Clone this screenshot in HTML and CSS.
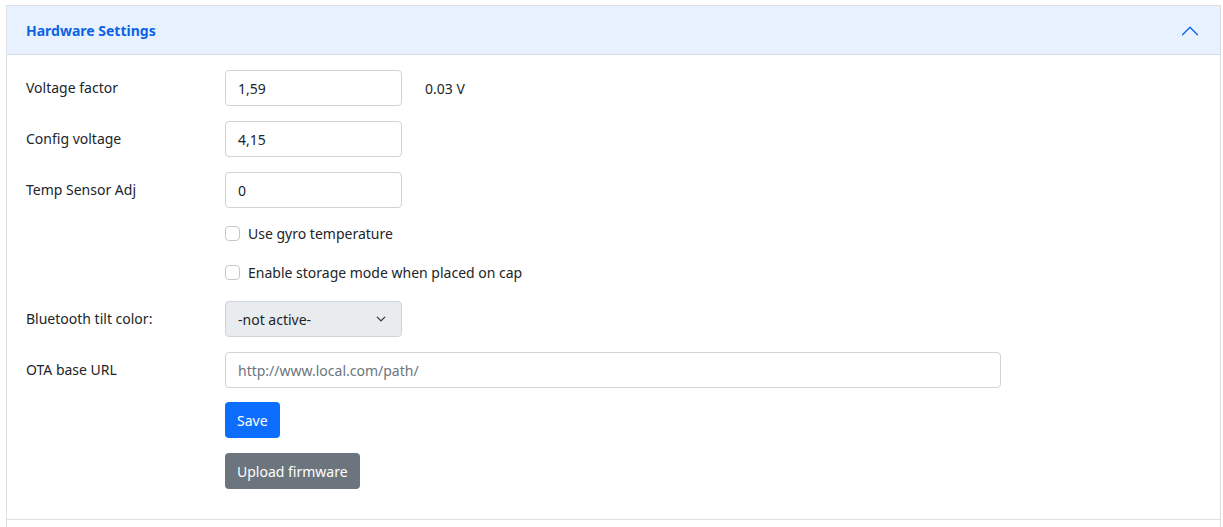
FILE: index.html
```html
<!DOCTYPE html>
<html lang="en">
<head>
  <meta charset="UTF-8" />
  <meta name="viewport" content="width=device-width, initial-scale=1.0" />
  <title>Hardware Settings</title>
  <link rel="stylesheet" href="styles.css">
</head>
<body>
  <div class="accordion">
    <div class="acc-item">
      <button class="acc-header" type="button">
        <span>Hardware Settings</span>
        <svg class="chevron" width="20" height="20" viewBox="0 0 16 16"><path fill="#0c63e4" fill-rule="evenodd" d="M1.646 4.646a.5.5 0 0 1 .708 0L8 10.293l5.646-5.647a.5.5 0 0 1 .708.708l-6 6a.5.5 0 0 1-.708 0l-6-6a.5.5 0 0 1 0-.708z"/></svg>
      </button>
      <div class="acc-body">
        <div class="row">
          <label class="lbl" for="voltageFactor">Voltage factor</label>
          <div class="ctrl">
            <input type="text" id="voltageFactor" class="field" value="1,59" />
            <span class="hint">0.03 V</span>
          </div>
        </div>
        <div class="row">
          <label class="lbl" for="configVoltage">Config voltage</label>
          <div class="ctrl"><input type="text" id="configVoltage" class="field" value="4,15" /></div>
        </div>
        <div class="row">
          <label class="lbl" for="tempAdj">Temp Sensor Adj</label>
          <div class="ctrl"><input type="text" id="tempAdj" class="field" value="0" /></div>
        </div>
        <div class="row check-row first-check">
          <span></span>
          <label class="check"><input type="checkbox" /><span>Use gyro temperature</span></label>
        </div>
        <div class="row check-row">
          <span></span>
          <label class="check"><input type="checkbox" /><span>Enable storage mode when placed on cap</span></label>
        </div>
        <div class="row">
          <label class="lbl" for="tiltColor">Bluetooth tilt color:</label>
          <div class="ctrl">
            <div class="select">
              <span>-not active-</span>
              <svg width="10" height="10" viewBox="0 0 16 16"><path fill="none" stroke="#343a40" stroke-linecap="round" stroke-linejoin="round" stroke-width="2.2" d="M2 5l6 6 6-6"/></svg>
            </div>
          </div>
        </div>
        <div class="row ota-row">
          <label class="lbl" for="otaUrl">OTA base URL</label>
          <div class="ctrl"><input type="text" id="otaUrl" class="field wide" placeholder="http://www.local.com/path/" /></div>
        </div>
        <div class="row">
          <span></span>
          <div class="ctrl"><button class="btn btn-primary" type="button">Save</button></div>
        </div>
        <div class="row">
          <span></span>
          <div class="ctrl"><button class="btn btn-secondary" type="button">Upload firmware</button></div>
        </div>
      </div>
    </div>
    <div class="acc-item next"></div>
  </div>
</body>
</html>
```
FILE: styles.css
```css
body {
  margin: 5px 2px 0 6px;
  font-family: 'Segoe UI', 'Noto Sans', 'Open Sans', sans-serif;
  font-size: 14px;
  line-height: 21px;
  color: #212529;
  background: #fff;
  overflow: hidden;
}
.accordion {
  border: 1px solid #dfdfdf;
  border-right-color: #dcdcdc;
}
.acc-header {
  box-sizing: border-box;
  display: flex;
  align-items: center;
  justify-content: space-between;
  width: 100%;
  height: 49px;
  padding: 1px 20px 0 19px;
  border: none;
  border-bottom: 1px solid #d3dbe6;
  background: #e7f1ff;
  color: #0c63e4;
  font-family: inherit;
  font-size: 14px;
  font-weight: 700;
  text-align: left;
  cursor: pointer;
}
.chevron {
  transform: rotate(180deg);
}
.acc-body {
  padding: 15px 19px 30px;
  border-bottom: 1px solid #dfdfdf;
}
.row {
  display: grid;
  grid-template-columns: 199px 1fr;
  align-items: center;
  min-height: 36px;
  margin-bottom: 15px;
}
.lbl {
  margin-top: -2px;
}
.row:last-child {
  margin-bottom: 0;
}
.ctrl {
  display: flex;
  align-items: center;
}
.field {
  box-sizing: border-box;
  width: 177px;
  height: 36px;
  padding: 6px 12px;
  border: 1px solid #ced4da;
  border-radius: 4px;
  font-family: inherit;
  font-size: 14px;
  color: #212529;
  background: #fff;
}
.field.wide {
  width: 776px;
}
.field::placeholder {
  color: #6c757d;
}
.hint {
  margin-left: 23px;
}
.check-row {
  min-height: 21px;
  margin-bottom: 18px;
}
.first-check {
  margin-top: 15px;
}
.ota-row {
  margin-bottom: 14px;
}
.check {
  display: flex;
  align-items: center;
  gap: 8px;
}
.check input {
  appearance: none;
  width: 15px;
  height: 15px;
  margin: 0;
  border: 1px solid #c4c8cc;
  border-radius: 4px;
  background: #fff;
}
.select {
  box-sizing: border-box;
  display: flex;
  align-items: center;
  justify-content: space-between;
  width: 177px;
  height: 36px;
  padding: 0 15px 0 12px;
  border: 1px solid #ced4da;
  border-radius: 4px;
  background: #e9ecef;
}
.btn {
  height: 36px;
  padding: 0 12px;
  border: none;
  border-radius: 4px;
  color: #fff;
  font-family: inherit;
  font-size: 14px;
  cursor: pointer;
}
.btn-primary {
  background: #0d6efd;
}
.btn-secondary {
  background: #6c757d;
}
.next {
  height: 40px;
}
```
